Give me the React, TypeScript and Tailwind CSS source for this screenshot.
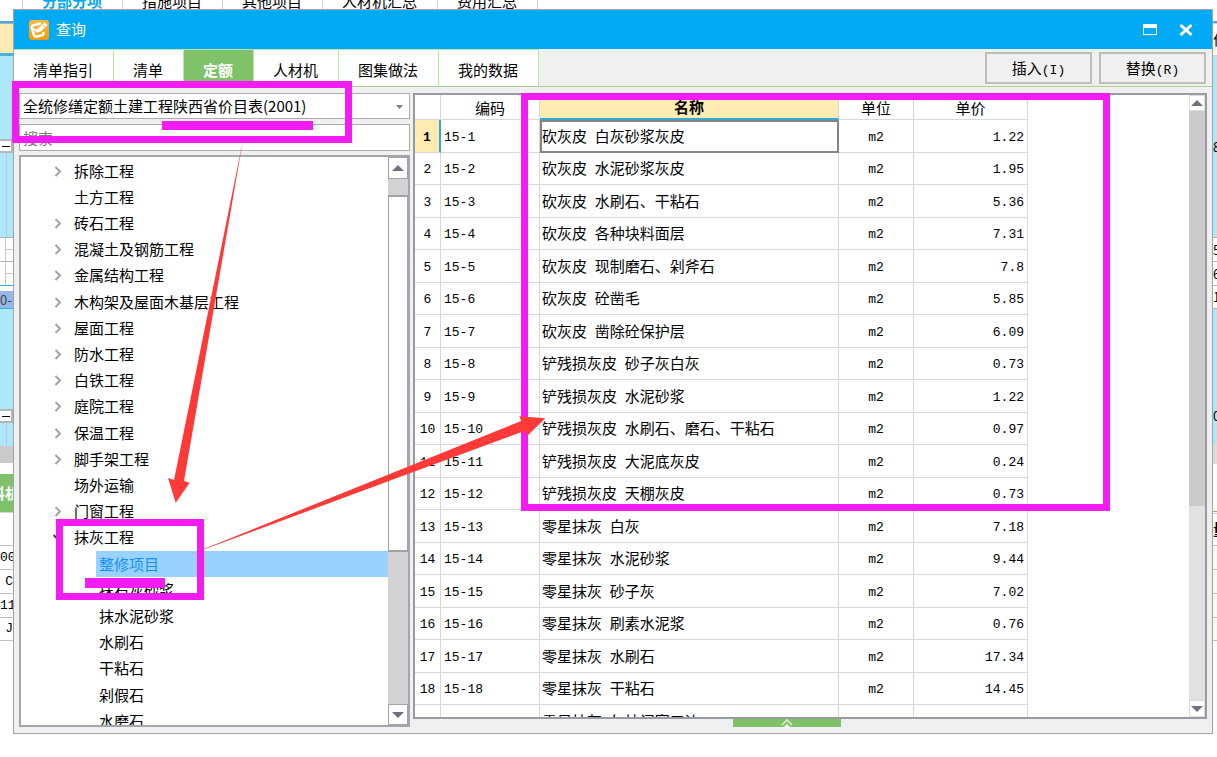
import React, { useState } from 'react';

interface TreeNode {
  name: string;
  level: number;
  state?: 'closed' | 'open';
}

interface QuotaRow {
  code: string;
  name: string;
  unit: string;
  price: string;
}

const projectTabs = ['分部分项', '措施项目', '其他项目', '人材机汇总', '费用汇总'];

const tabs = ['清单指引', '清单', '定额', '人材机', '图集做法', '我的数据'];

const tree: TreeNode[] = [
  { name: '拆除工程', level: 0, state: 'closed' },
  { name: '土方工程', level: 0 },
  { name: '砖石工程', level: 0, state: 'closed' },
  { name: '混凝土及钢筋工程', level: 0, state: 'closed' },
  { name: '金属结构工程', level: 0, state: 'closed' },
  { name: '木构架及屋面木基层工程', level: 0, state: 'closed' },
  { name: '屋面工程', level: 0, state: 'closed' },
  { name: '防水工程', level: 0, state: 'closed' },
  { name: '白铁工程', level: 0, state: 'closed' },
  { name: '庭院工程', level: 0, state: 'closed' },
  { name: '保温工程', level: 0, state: 'closed' },
  { name: '脚手架工程', level: 0, state: 'closed' },
  { name: '场外运输', level: 0 },
  { name: '门窗工程', level: 0, state: 'closed' },
  { name: '抹灰工程', level: 0, state: 'open' },
  { name: '整修项目', level: 1 },
  { name: '抹石灰砂浆', level: 1 },
  { name: '抹水泥砂浆', level: 1 },
  { name: '水刷石', level: 1 },
  { name: '干粘石', level: 1 },
  { name: '剁假石', level: 1 },
  { name: '水磨石', level: 1 },
];

const rows: QuotaRow[] = [
  { code: '15-1', name: '砍灰皮 白灰砂浆灰皮', unit: 'm2', price: '1.22' },
  { code: '15-2', name: '砍灰皮 水泥砂浆灰皮', unit: 'm2', price: '1.95' },
  { code: '15-3', name: '砍灰皮 水刷石、干粘石', unit: 'm2', price: '5.36' },
  { code: '15-4', name: '砍灰皮 各种块料面层', unit: 'm2', price: '7.31' },
  { code: '15-5', name: '砍灰皮 现制磨石、剁斧石', unit: 'm2', price: '7.8' },
  { code: '15-6', name: '砍灰皮 砼凿毛', unit: 'm2', price: '5.85' },
  { code: '15-7', name: '砍灰皮 凿除砼保护层', unit: 'm2', price: '6.09' },
  { code: '15-8', name: '铲残损灰皮 砂子灰白灰', unit: 'm2', price: '0.73' },
  { code: '15-9', name: '铲残损灰皮 水泥砂浆', unit: 'm2', price: '1.22' },
  { code: '15-10', name: '铲残损灰皮 水刷石、磨石、干粘石', unit: 'm2', price: '0.97' },
  { code: '15-11', name: '铲残损灰皮 大泥底灰皮', unit: 'm2', price: '0.24' },
  { code: '15-12', name: '铲残损灰皮 天棚灰皮', unit: 'm2', price: '0.73' },
  { code: '15-13', name: '零星抹灰 白灰', unit: 'm2', price: '7.18' },
  { code: '15-14', name: '零星抹灰 水泥砂浆', unit: 'm2', price: '9.44' },
  { code: '15-15', name: '零星抹灰 砂子灰', unit: 'm2', price: '7.02' },
  { code: '15-16', name: '零星抹灰 刷素水泥浆', unit: 'm2', price: '0.76' },
  { code: '15-17', name: '零星抹灰 水刷石', unit: 'm2', price: '17.34' },
  { code: '15-18', name: '零星抹灰 干粘石', unit: 'm2', price: '14.45' },
  { code: '15-19', name: '零星抹灰 勾抹门窗口边', unit: 'm2', price: '0.55' },
];

// latin runs are set in a smaller monospace, half the width of a hanzi
const Mixed: React.FC<{ text: string }> = ({ text }) => (
  <>
    {text.split(/([\x20-\x7e]+)/).map((part, i) =>
      i % 2 === 1 ? (
        <span key={i} className="font-['Liberation_Mono',monospace] text-[13px] whitespace-pre">
          {part}
        </span>
      ) : (
        part
      ),
    )}
  </>
);

const Arrow: React.FC<{ up?: boolean }> = ({ up }) => (
  <svg width="12" height="6" viewBox="0 0 12 6" fill="#6f7180">
    {up ? <path d="M0 6 6 0l6 6z" /> : <path d="M0 0h12L6 6z" />}
  </svg>
);

const Logo = () => (
  <svg width="20" height="20" viewBox="0 0 20 20">
    <defs>
      <linearGradient id="logo" x1="0" y1="0" x2="0" y2="1">
        <stop offset="0" stopColor="#fdb53a" />
        <stop offset="1" stopColor="#f59a08" />
      </linearGradient>
    </defs>
    <rect width="20" height="20" rx="3" fill="url(#logo)" />
    <path
      d="M11 3.500 4 5.500c-1 .3-1.500 1-1.200 2L5 15c.5 1.500 1.500 2 3 1.600l5-1.400c1.200-.4 1.700-1.200 1.400-2.400"
      fill="none"
      stroke="#fff"
      strokeWidth="2.600"
      strokeLinecap="round"
    />
    <path d="m15.500 2.500 3 2.500-7.500 7-4 .8.900-3.800z" fill="#fff" />
    <path d="m14 5 2 1.800" stroke="#f9a822" strokeWidth=".8" />
    <path d="m4.500 8 3 1.200-.8 3.800z" fill="#fff" />
  </svg>
);

const ProjectTabs = () => (
  <div className="flex h-[9px] shrink-0 items-end overflow-hidden pl-[22px] leading-4">
    {projectTabs.map((tab, i) => (
      <span
        key={tab}
        className={`flex h-4 items-center border-l border-[#d0d0d0] pr-5 pl-[19px] whitespace-nowrap last:border-r ${
          i === 0 ? 'font-bold text-[#02a9f4]' : ''
        }`}
      >
        {tab}
      </span>
    ))}
  </div>
);

// the edges of the project window that stay visible beside the dialog
const LeftEdge = () => (
  <div className="flex w-[13px] shrink-0 flex-col overflow-hidden text-[13px] whitespace-nowrap" aria-hidden="true">
    <div className="h-3" />
    <div className="h-[3px] border-b border-[#b0b0b0] bg-[#35b1e6]" />
    <div className="h-[29px] bg-[#ffecb3]" />
    <div className="h-[3px] bg-[#48b4dd]" />
    <div className="h-[83px] bg-[#ade8fa]" />
    <div className="flex h-[14px] items-center border-2 border-l-0 border-[#b5b5b5] bg-white pl-0.5">
      <div className="h-px w-2 bg-black" />
    </div>
    <div className="flex h-[84px] bg-[#ade8fa]">
      <div className="w-[7px] border-r border-[#c4c8ca]" />
    </div>
    <div className="flex h-6 items-center border-t border-[#b5b5b5]">
      <div className="h-full w-[7px] border-r border-[#c4c8ca]" />
      <div className="h-px w-2 bg-[#c4c8ca]" />
    </div>
    <div className="flex h-6 items-center border-t border-[#b5b5b5]">
      <div className="h-full w-[7px] border-r border-[#c4c8ca]" />
      <div className="h-px w-2 bg-[#c4c8ca]" />
    </div>
    <div className="h-[6px] border-t border-[#35b1e6]" />
    <div className="h-[18px] border-b border-[#35b1e6] bg-[#94b8e8] leading-[18px] text-[#444]">0-</div>
    <div className="h-[100px] bg-[#ade8fa]" />
    <div className="flex h-[14px] items-center border-2 border-l-0 border-[#b5b5b5] bg-white pl-0.5">
      <div className="h-px w-2 bg-black" />
    </div>
    <div className="flex h-[23px] bg-[#ade8fa]">
      <div className="w-[7px] border-r border-[#c4c8ca]" />
    </div>
    <div className="h-[17px] bg-[#cbcbcb]" />
    <div className="h-[11px]" />
    <div className="flex h-[38px] w-5 items-center justify-end bg-[#80c269] text-[15px] font-bold text-white">料机</div>
    <div className="h-[33px] border-t border-[#d5d5d5]" />
    <div className="flex h-6 items-center border-t border-[#c0c0c0] font-['Liberation_Mono',monospace]">00</div>
    <div className="flex h-6 items-center justify-end border-t border-[#c0c0c0] font-['Liberation_Mono',monospace]">C</div>
    <div className="flex h-6 items-center border-t border-[#c0c0c0] font-['Liberation_Mono',monospace]">11</div>
    <div className="flex h-6 items-center justify-end border-y border-[#c0c0c0] font-['Liberation_Mono',monospace]">J</div>
  </div>
);

const RightEdge = () => (
  <div className="flex w-1 shrink-0 flex-col overflow-hidden text-[13px] whitespace-nowrap" aria-hidden="true">
    <div className="h-3" />
    <div className="h-[3px] border-b border-[#d0d0d0] bg-[#35b1e6]" />
    <div className="flex h-8 items-center border-b border-[#d0d0d0] text-[15px]">价</div>
    <div className="flex h-[181px] items-center bg-[#ade8fa]">8</div>
    <div className="flex h-6 items-center border-t border-[#b5b5b5]">5</div>
    <div className="flex h-6 items-center border-t border-[#b5b5b5]">6</div>
    <div className="flex h-6 items-center border-y border-[#b5b5b5]">1</div>
    <div className="flex h-[136px] items-end bg-[#ade8fa] pb-5">0</div>
    <div className="h-[19px] bg-[#dcdcdc]" />
    <div className="h-[47px]" />
    <div className="h-[3px] border-y border-t-[#80c269] border-b-[#d0d0d0]" />
    <div className="flex h-[31px] items-center text-[15px] font-bold">量</div>
    <div className="h-6 border-t border-[#c0c0c0] bg-[#fffaf2]" />
    <div className="h-6 border-t border-[#c0c0c0] bg-[#fffaf2]" />
    <div className="h-6 border-t border-[#c0c0c0] bg-[#fffaf2]" />
    <div className="h-6 border-y border-[#c0c0c0] bg-[#fffaf2]" />
  </div>
);

const TitleBar = () => (
  <header className="flex h-[39px] shrink-0 items-center bg-[#02a9f4] pr-[19px] pl-[15px] text-white">
    <Logo />
    <h1 className="ml-[7px] flex-1">查询</h1>
    <button type="button" aria-label="最大化" className="mr-[22px]">
      <svg width="14" height="11" viewBox="0 0 14 11">
        <path d="M0 0h14v11H0zM1 4v6h12V4z" fill="#fff" fillRule="evenodd" />
      </svg>
    </button>
    <button type="button" aria-label="关闭">
      <svg width="14" height="12" viewBox="0 0 14 12" stroke="#fff" strokeWidth="3">
        <path d="m1.500 1 11 10M12.500 1l-11 10" />
      </svg>
    </button>
  </header>
);

const App: React.FC = () => {
  const [activeTab, setActiveTab] = useState('定额');
  const [activeNode, setActiveNode] = useState('整修项目');
  const [activeRow, setActiveRow] = useState(0);
  const [keyword, setKeyword] = useState('');

  return (
    <div className="relative flex h-screen flex-col overflow-hidden bg-white font-['Noto_Sans_CJK_SC',sans-serif] text-[15px] text-black">
      <ProjectTabs />
      <div className="flex min-h-0 flex-1">
        <LeftEdge />
        <main className="mb-[23px] flex min-w-0 flex-1 flex-col border border-[#a3a3a3] bg-[#f0f0f0]">
          <TitleBar />

          <div className="flex h-[38px] shrink-0 items-center border-b border-[#a5d195]">
            <nav className="flex h-full flex-1">
              {tabs.map((tab) => (
                <button
                  key={tab}
                  type="button"
                  onClick={() => setActiveTab(tab)}
                  className={`border-t border-r border-[#b9e8a6] pt-1 pr-5 pl-[19px] whitespace-nowrap ${
                    tab === activeTab ? 'bg-[#80c269] font-bold text-white' : 'bg-white'
                  }`}
                >
                  {tab}
                </button>
              ))}
            </nav>
            <div className="flex gap-[7px] pr-[6px]">
              <button type="button" className="h-8 w-[107px] border-2 border-[#bdbdbd] pt-0.5">
                <Mixed text="插入(I)" />
              </button>
              <button type="button" className="h-8 w-[107px] border-2 border-[#bdbdbd] pt-0.5">
                <Mixed text="替换(R)" />
              </button>
            </div>
          </div>

          <div className="flex min-h-0 flex-1 gap-[3px] px-[5px] py-[6px]">
            <aside className="flex w-[391px] shrink-0 flex-col">
              <div className="relative mb-[5px]">
                <select aria-label="定额库" className="block h-[26px] w-full appearance-none border border-[#ababab] bg-white px-[3px]">
                  <option>全统修缮定额土建工程陕西省价目表(2001)</option>
                </select>
                <svg className="pointer-events-none absolute top-3 right-[7px]" width="7" height="4" viewBox="0 0 7 4" fill="#7b7b8c">
                  <path d="M0 0h7L3.500 4z" />
                </svg>
              </div>
              <input
                type="text"
                aria-label="搜索"
                placeholder="搜索"
                value={keyword}
                onChange={(e) => setKeyword(e.target.value)}
                className="mb-1 h-[27px] w-full border border-[#ababab] bg-white px-[3px] placeholder:text-[#7a7a7a]"
              />
              <div className="flex min-h-0 flex-1 border-2 border-[#a3a7ad] bg-white">
                <ul className="flex-1 overflow-hidden pt-px">
                  {tree.map((node) => (
                    <li key={node.name} className="flex h-[26px] nth-[5n]:h-[27px]">
                      {node.level === 0 ? (
                        <button type="button" className="flex flex-1 items-center gap-3 pl-[33px]" onClick={() => setActiveNode(node.name)}>
                          <svg
                            width="8"
                            height="11"
                            viewBox="0 0 8 11"
                            fill="none"
                            strokeWidth="2"
                            className={node.state === 'open' ? 'rotate-90 stroke-[#444]' : 'stroke-[#a3a3a3]'}
                          >
                            {node.state && <path d="m1.500 1 4.500 4.500L1.500 10" />}
                          </svg>
                          {node.name}
                        </button>
                      ) : (
                        <button
                          type="button"
                          onClick={() => setActiveNode(node.name)}
                          className={`ml-[75px] flex flex-1 items-center pl-[3px] ${
                            node.name === activeNode ? 'bg-[#99d1ff] text-[#1390f7]' : ''
                          }`}
                        >
                          {node.name}
                        </button>
                      )}
                    </li>
                  ))}
                </ul>
                <div className="flex w-5 flex-col bg-[#d3d3d3]">
                  <button type="button" aria-label="向上滚动" className="flex h-[22px] items-center justify-center border border-[#a3a3a3] bg-white">
                    <Arrow up />
                  </button>
                  <div className="mt-4 h-[357px] border border-t-2 border-b-2 border-[#a3a3a3] bg-white" />
                  <button
                    type="button"
                    aria-label="向下滚动"
                    className="mt-auto flex h-[21px] items-center justify-center border border-[#a3a3a3] bg-white"
                  >
                    <Arrow />
                  </button>
                </div>
              </div>
            </aside>

            <section className="flex min-w-0 flex-1 flex-col">
              <div className="flex min-h-0 flex-1 border-2 border-[#989ba3] bg-white">
                <div className="min-w-0 flex-1 overflow-hidden">
                  <table className="w-[613px] table-fixed border-separate border-spacing-0">
                    <colgroup>
                      <col className="w-[26px]" />
                      <col className="w-[99px]" />
                      <col className="w-[299px]" />
                      <col className="w-[75px]" />
                      <col className="w-[114px]" />
                    </colgroup>
                    <thead>
                      <tr className="h-[25px] leading-5">
                        <th className="border-r border-b border-[#d8d8d8] p-0" />
                        <th className="border-r border-b border-[#d8d8d8] p-0 pt-px font-normal">编码</th>
                        <th className="border-r border-b-2 border-r-[#d8d8d8] border-b-[#35a9d6] bg-[#ffecb3] p-0 pt-px font-bold">名称</th>
                        <th className="border-r border-b border-[#d8d8d8] p-0 pt-px font-normal">单位</th>
                        <th className="border-r border-b border-[#d8d8d8] p-0 pt-px font-normal">单价</th>
                      </tr>
                    </thead>
                    <tbody>
                      {rows.map((row, i) => {
                        const active = i === activeRow;
                        return (
                          <tr key={row.code} className="h-[33px] leading-5 even:h-8" onClick={() => setActiveRow(i)}>
                            <td
                              className={`border-b border-b-[#d8d8d8] p-0 text-center ${
                                active ? 'border-r-2 border-r-[#35a9d6] bg-[#ffecb3] font-bold' : 'border-r border-r-[#d8d8d8]'
                              }`}
                            >
                              <Mixed text={String(i + 1)} />
                            </td>
                            <td className="border-r border-b border-[#d8d8d8] p-0 pl-[3px]">
                              <Mixed text={row.code} />
                            </td>
                            <td
                              className={`p-0 pt-0.5 whitespace-nowrap ${
                                active ? 'border-2 border-[#858585]' : 'border-r border-b border-[#d8d8d8] pl-0.5'
                              }`}
                            >
                              <Mixed text={row.name} />
                            </td>
                            <td className="border-r border-b border-[#d8d8d8] p-0 text-center">
                              <Mixed text={row.unit} />
                            </td>
                            <td className="border-r border-b border-[#d8d8d8] p-0 pr-[3px] text-right">
                              <Mixed text={row.price} />
                            </td>
                          </tr>
                        );
                      })}
                    </tbody>
                  </table>
                </div>
                <div className="flex w-4 flex-col bg-[#e1e1e1]">
                  <button type="button" aria-label="向上滚动" className="flex h-4 items-center justify-center border border-[#dcdcdc] bg-white">
                    <Arrow up />
                  </button>
                  <div className="h-[395px] bg-[#cbcbcb]" />
                  <button
                    type="button"
                    aria-label="向下滚动"
                    className="mt-auto flex h-[17px] items-center justify-center border border-[#dcdcdc] bg-white"
                  >
                    <Arrow />
                  </button>
                </div>
              </div>
              <button type="button" aria-label="展开" className="ml-80 flex h-2 w-[108px] items-center justify-center bg-[#80c269]">
                <svg width="12" height="8" viewBox="0 0 12 8" fill="none" stroke="#dff2d8" strokeWidth="1.500">
                  <path d="m1 6 5-5 5 5" />
                  <path d="m3 8 3-3 3 3z" fill="#fff" stroke="none" />
                </svg>
              </button>
            </section>
          </div>
        </main>
        <RightEdge />
      </div>

      {/* highlight boxes and arrows drawn over the window */}
      <svg className="pointer-events-none absolute top-0 left-0" width="1217" height="757" viewBox="0 0 1217 757">
        <g fill="none" stroke="#f31cf3" strokeWidth="7">
          <rect x="15.5" y="84.5" width="333" height="55" />
          <rect x="524.5" y="96.5" width="582" height="411" />
          <rect x="59.5" y="522.5" width="141" height="74" />
        </g>
        <g fill="#f31cf3">
          <rect x="162" y="121" width="151" height="9" />
          <rect x="85" y="578" width="80" height="10" />
        </g>
        <g fill="#fe3a38">
          <path d="M243 140 174 480l-6-2 7.700 24.700 14-20L184 481z" />
          <path d="M187.500 555.500 521.300 421l-2-4.700 26 2-18 17.400-3-4.700z" />
        </g>
      </svg>
    </div>
  );
};

export default App;
